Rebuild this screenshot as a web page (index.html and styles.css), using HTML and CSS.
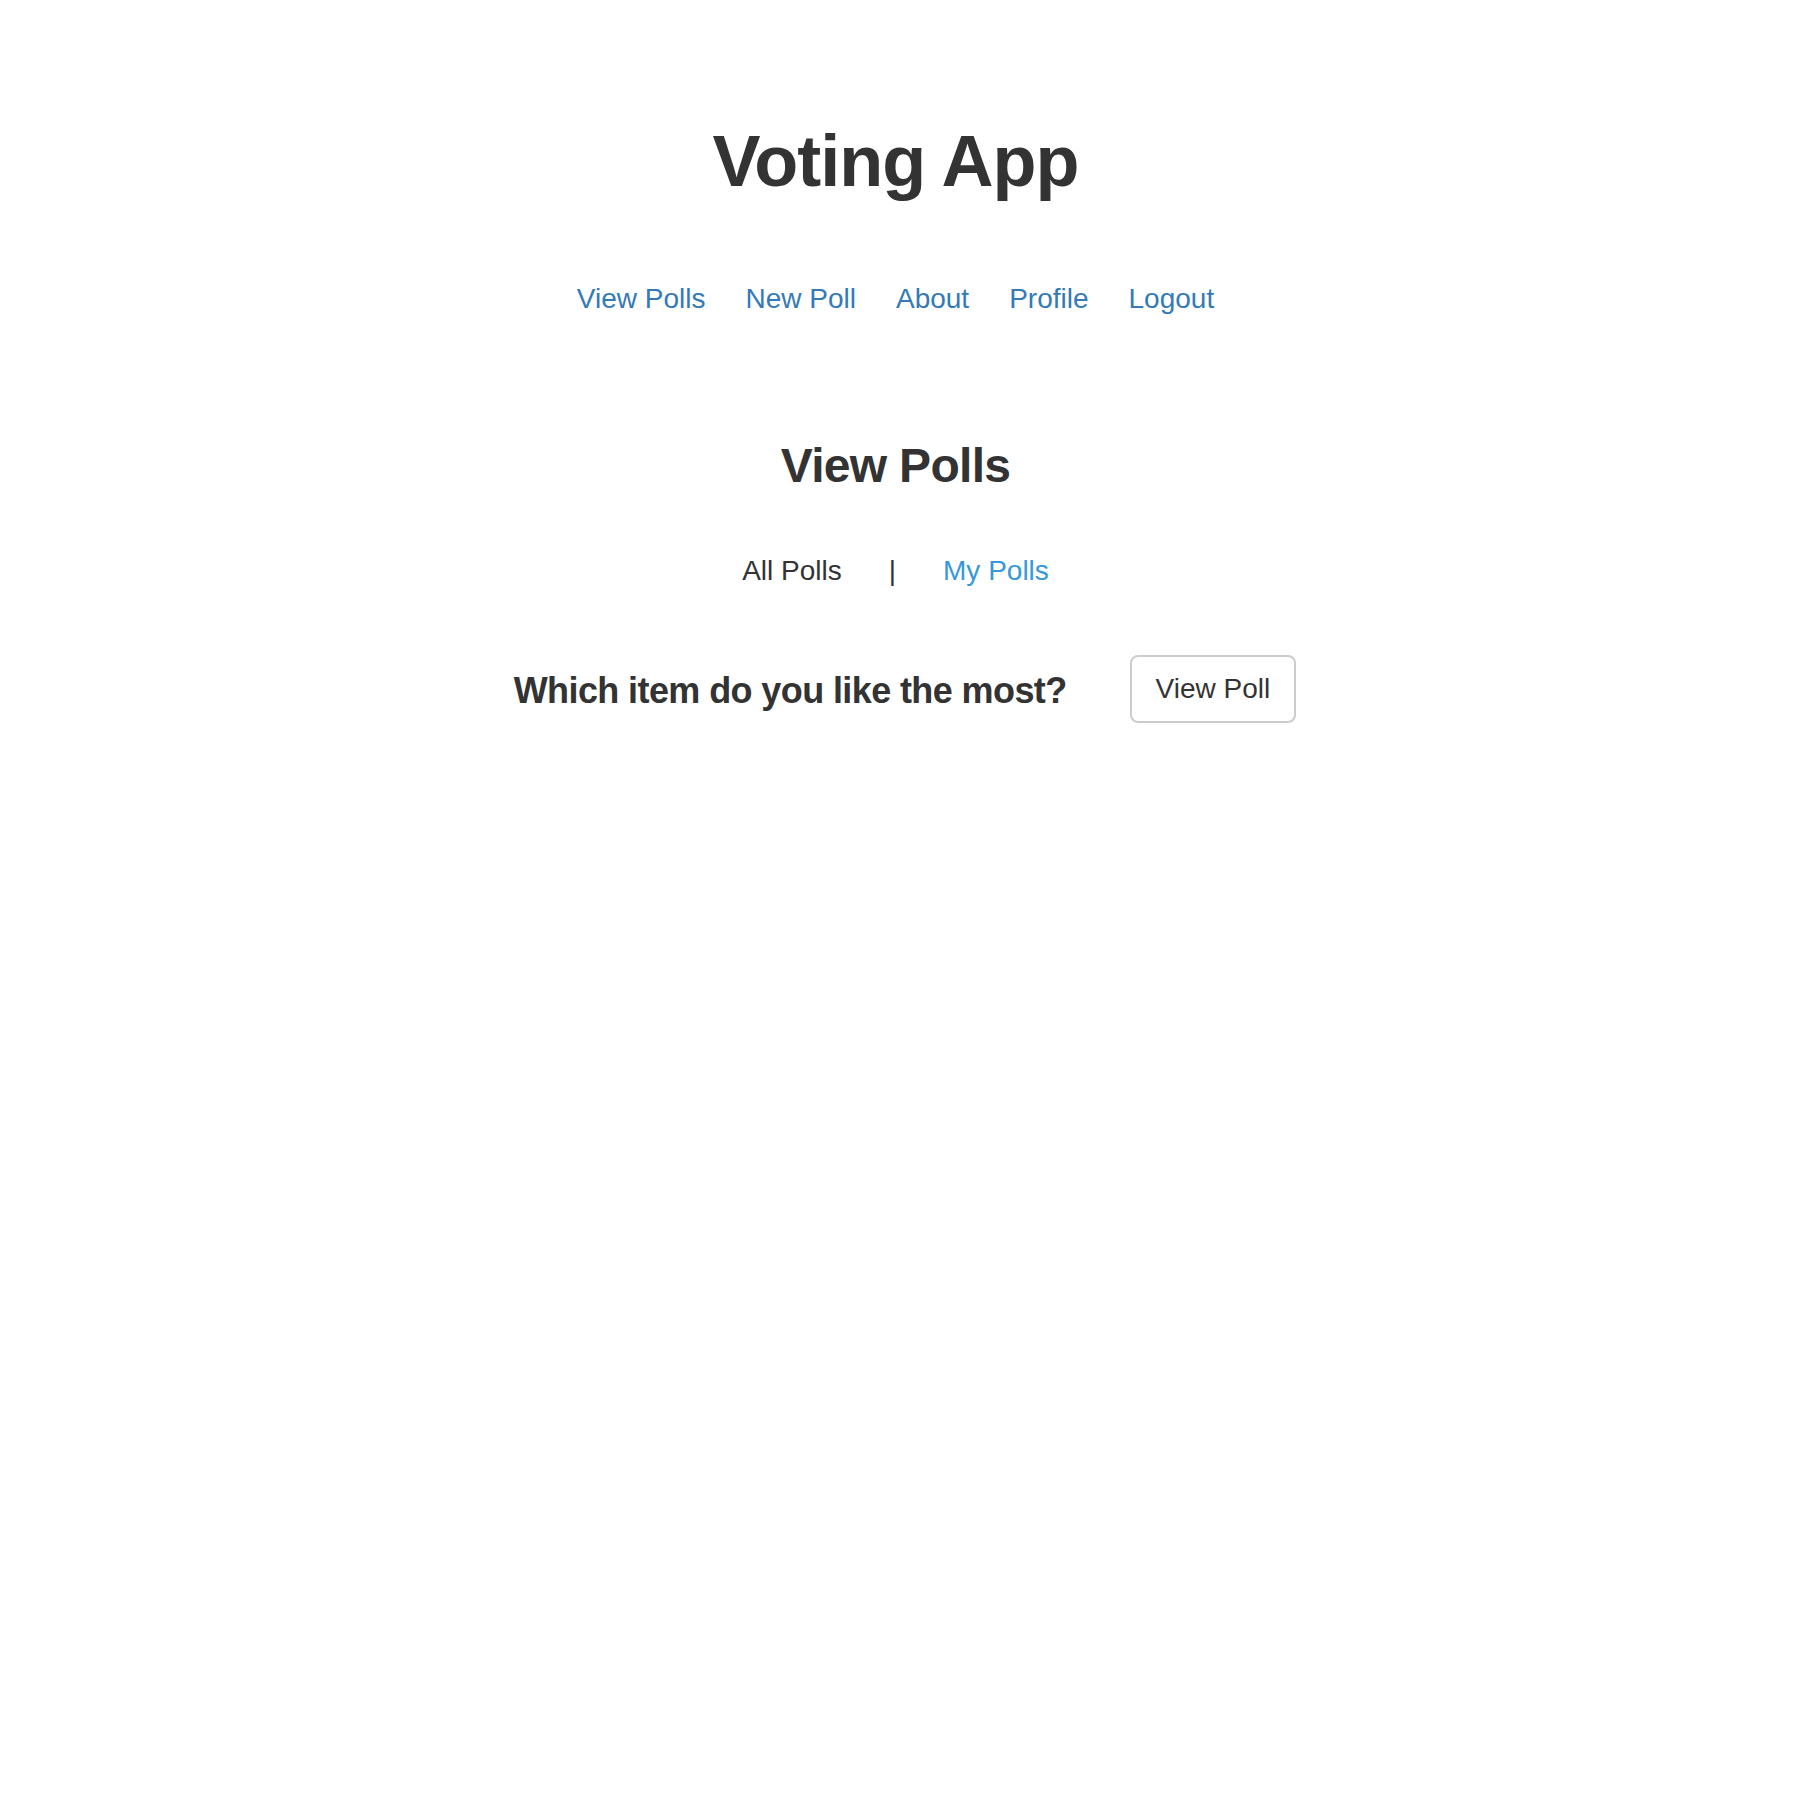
FILE: index.html
```html
<!DOCTYPE html>
<html lang="en">
<head>
<meta charset="utf-8">
<title>Voting App</title>
<link rel="stylesheet" href="styles.css">
</head>
<body>
<div class="page">
  <header class="masthead">
    <h1 class="app-title">Voting App</h1>
    <nav class="main-nav">
      <a class="nav-link" href="#">View Polls</a>
      <a class="nav-link" href="#">New Poll</a>
      <a class="nav-link" href="#">About</a>
      <a class="nav-link" href="#">Profile</a>
      <a class="nav-link" href="#">Logout</a>
    </nav>
  </header>
  <main class="content">
    <h3 class="section-title">View Polls</h3>
    <div class="tabs">
      <span class="tab tab-current">All Polls</span>
      <span class="tab-sep">|</span>
      <a class="tab tab-link" href="#">My Polls</a>
    </div>
    <div class="poll-list">
      <div class="poll-row">
        <h4 class="poll-question">Which item do you like the most?</h4>
        <button class="btn" type="button">View Poll</button>
      </div>
    </div>
  </main>
</div>
</body>
</html>
```

FILE: styles.css
```css
html, body {
  margin: 0;
  padding: 0;
  background: #ffffff;
}

body {
  font-family: "Liberation Sans", Arial, Helvetica, sans-serif;
  color: #333333;
  font-size: 28px;
}

.page {
  padding-right: 9px;
  padding-top: 121px;
}

.masthead {
  display: flex;
  flex-direction: column;
  align-items: center;
}

.app-title {
  margin: 0;
  font-size: 72px;
  line-height: 80px;
  font-weight: 700;
  letter-spacing: -1px;
  color: #333333;
}

.main-nav {
  display: flex;
  justify-content: center;
  margin-top: 78px;
  line-height: 40px;
}

.nav-link {
  padding: 0 20px;
  color: #337ab7;
  text-decoration: none;
}

.content {
  display: flex;
  flex-direction: column;
  align-items: center;
}

.section-title {
  margin: 119px 0 0;
  font-size: 48px;
  line-height: 56px;
  font-weight: 700;
  letter-spacing: -0.7px;
  color: #333333;
}

.tabs {
  display: flex;
  justify-content: center;
  gap: 47px;
  margin-top: 57px;
  line-height: 40px;
}

.tab-current {
  color: #333333;
}

.tab-sep {
  color: #333333;
}

.tab-link {
  color: #3498db;
  text-decoration: none;
}

.poll-list {
  margin-top: 64px;
  display: flex;
  flex-direction: column;
  align-items: center;
}

.poll-row {
  display: flex;
  align-items: flex-start;
  gap: 63px;
  padding-left: 19px;
}

.poll-question {
  margin: 16px 0 0;
  font-size: 36px;
  line-height: 40px;
  font-weight: 700;
  letter-spacing: -0.6px;
  color: #333333;
}

.btn {
  font-family: inherit;
  font-size: 28px;
  line-height: 40px;
  padding: 12px 24px;
  color: #333333;
  background: #ffffff;
  border: 2px solid #cccccc;
  border-radius: 8px;
  cursor: pointer;
}
```
